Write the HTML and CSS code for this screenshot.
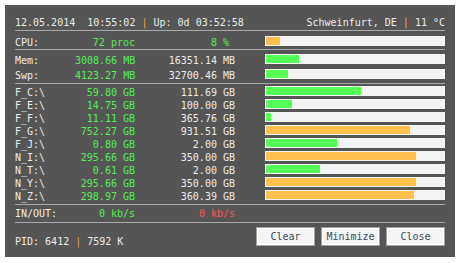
FILE: index.html
```html
<!DOCTYPE html>
<html lang="en">
<head>
    <meta charset="UTF-8">
    <title>System Monitor</title>
    <link rel="stylesheet" href="styles.css">
</head>
<body>
  <div class="panel">
    <div class="head">
      <span>12.05.2014  10:55:02 <span class="pipe">|</span> Up: 0d 03:52:58</span>
      <span>Schweinfurt, DE <span class="pipe">|</span> 11 °C</span>
    </div>
    <div class="sep"></div>

    <div class="block cpu">
      <div class="row">
        <span class="label">CPU:</span>
        <span class="used">72 proc</span>
        <span class="total green pct">8 %</span>
        <div class="bar"><div class="fill orange" style="width: 8%"></div></div>
      </div>
    </div>
    <div class="sep"></div>

    <div class="block mem">
      <div class="row">
        <span class="label">Mem:</span>
        <span class="used">3008.66 MB</span>
        <span class="total">16351.14 MB</span>
        <div class="bar"><div class="fill" style="width: 18.4%"></div></div>
      </div>
      <div class="row">
        <span class="label">Swp:</span>
        <span class="used">4123.27 MB</span>
        <span class="total">32700.46 MB</span>
        <div class="bar"><div class="fill" style="width: 12.6%"></div></div>
      </div>
    </div>
    <div class="sep"></div>

    <div class="block disks">
      <div class="row">
        <span class="label">F_C:\</span>
        <span class="used">59.80 GB</span>
        <span class="total">111.69 GB</span>
        <div class="bar"><div class="fill" style="width: 53.5%"></div></div>
      </div>
      <div class="row">
        <span class="label">F_E:\</span>
        <span class="used">14.75 GB</span>
        <span class="total">100.00 GB</span>
        <div class="bar"><div class="fill" style="width: 14.75%"></div></div>
      </div>
      <div class="row">
        <span class="label">F_F:\</span>
        <span class="used">11.11 GB</span>
        <span class="total">365.76 GB</span>
        <div class="bar"><div class="fill" style="width: 3.04%"></div></div>
      </div>
      <div class="row">
        <span class="label">F_G:\</span>
        <span class="used">752.27 GB</span>
        <span class="total">931.51 GB</span>
        <div class="bar"><div class="fill orange" style="width: 80.76%"></div></div>
      </div>
      <div class="row">
        <span class="label">F_J:\</span>
        <span class="used">0.80 GB</span>
        <span class="total">2.00 GB</span>
        <div class="bar"><div class="fill" style="width: 40%"></div></div>
      </div>
      <div class="row">
        <span class="label">N_I:\</span>
        <span class="used">295.66 GB</span>
        <span class="total">350.00 GB</span>
        <div class="bar"><div class="fill orange" style="width: 84.47%"></div></div>
      </div>
      <div class="row">
        <span class="label">N_T:\</span>
        <span class="used">0.61 GB</span>
        <span class="total">2.00 GB</span>
        <div class="bar"><div class="fill" style="width: 30.5%"></div></div>
      </div>
      <div class="row">
        <span class="label">N_Y:\</span>
        <span class="used">295.66 GB</span>
        <span class="total">350.00 GB</span>
        <div class="bar"><div class="fill orange" style="width: 84.47%"></div></div>
      </div>
      <div class="row">
        <span class="label">N_Z:\</span>
        <span class="used">298.97 GB</span>
        <span class="total">360.39 GB</span>
        <div class="bar"><div class="fill orange" style="width: 82.96%"></div></div>
      </div>
    </div>
    <div class="sep"></div>

    <div class="block net">
      <div class="row">
        <span class="label">IN/OUT:</span>
        <span class="used">0 kb/s</span>
        <span class="total red">0 kb/s</span>
      </div>
    </div>
    <div class="sep"></div>

    <div class="foot">
      <span class="pid">PID: 6412 <span class="pipe">|</span> 7592 K</span>
      <div class="buttons">
        <button type="button">Clear</button>
        <button type="button">Minimize</button>
        <button type="button">Close</button>
      </div>
    </div>
  </div>
</body>
</html>
```

FILE: styles.css
```css
body {
  margin: 5px;
  background: #fff;
  font-family: "DejaVu Sans Mono", "Liberation Mono", monospace;
  font-size: 10px;
}

.panel {
  width: 430px;
  height: 241px;
  padding: 11px 10px 0;
  background: #555555;
  color: #ececec;
}

.head {
  display: flex;
  justify-content: space-between;
  line-height: 13px;
  white-space: pre;
}

.pipe {
  color: #f0a840;
}

.sep {
  height: 1px;
  background: #a8a8a8;
  margin-top: 1px;
}

.row {
  display: grid;
  grid-template-columns: 60px 60px 100px 1fr;
  line-height: 13px;
  white-space: pre;
}

.row .bar {
  margin-left: 30px;
}

.used {
  text-align: right;
  color: #55ee55;
}

.total {
  text-align: right;
}

.green {
  color: #55ee55;
}

.red {
  color: #ff5555;
}

.pct {
  padding-right: 6px;
}

.bar {
  height: 8px;
  padding: 1px;
  background: #f4f4f4;
}

.fill {
  height: 8px;
  background: #55ff55;
}

.fill.orange {
  background: #ffc050;
}

.cpu {
  padding-top: 5px;
  margin-bottom: -1px;
}

.mem {
  padding-top: 4px;
  display: flex;
  flex-direction: column;
  gap: 2px;
}

.disks {
  padding-top: 2px;
}

.net {
  padding-top: 2px;
  padding-bottom: 1px;
}

.foot {
  display: flex;
  justify-content: space-between;
  align-items: flex-start;
  padding-top: 4px;
}

.pid {
  margin-top: 8px;
  line-height: 13px;
  white-space: pre;
}

.buttons {
  display: flex;
  gap: 6px;
}

button {
  width: 59px;
  height: 19px;
  padding: 0;
  font-family: "DejaVu Sans Mono", "Liberation Mono", monospace;
  font-size: 10px;
  color: #3c4a5c;
  background: #f4f4f4;
  border: 1px solid #a0a0a0;
  box-shadow: inset 0 0 0 1px #fff;
}
```
